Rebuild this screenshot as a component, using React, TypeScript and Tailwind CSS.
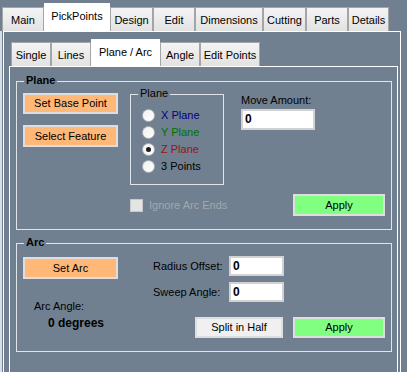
const outerTabs = [
  { name: "Main", w: "w-[42px]" },
  { name: "PickPoints", w: "w-[66px]", active: true },
  { name: "Design", w: "w-[43px]" },
  { name: "Edit", w: "w-[42px]" },
  { name: "Dimensions", w: "w-[68px]" },
  { name: "Cutting", w: "w-[43px]" },
  { name: "Parts", w: "w-[42px]" },
  { name: "Details", w: "w-[41px]" },
];

const innerTabs = [
  { name: "Single", w: "w-[40px]" },
  { name: "Lines", w: "w-[40px]" },
  { name: "Plane / Arc", w: "w-[69px]", active: true },
  { name: "Angle", w: "w-[40px]" },
  { name: "Edit Points", w: "w-[60px]" },
];

const planes = [
  { label: "X Plane", color: "text-[#000080]" },
  { label: "Y Plane", color: "text-[#007000]" },
  { label: "Z Plane", color: "text-[#a01010]", checked: true },
  { label: "3 Points", color: "text-black" },
];

function Tab({ name, w, active, tall, short }: { name: string; w: string; active?: boolean; tall: string; short: string }) {
  return active ? (
    <div className={`${w} ${tall} flex items-center justify-center bg-white pb-[1px]`}>{name}</div>
  ) : (
    <div
      className={`${w} ${short} flex items-center justify-center border-t border-r border-l border-[#a5a5a5] bg-gradient-to-b from-[#f4f4f4] to-[#e2e2e2] pt-[1px]`}
    >
      {name}
    </div>
  );
}

function GroupBox({ title, bold, className, children }: { title: string; bold?: boolean; className: string; children: React.ReactNode }) {
  return (
    <div className={`relative border border-[#e0e5ea] ${className}`}>
      <span className={`absolute -top-[8px] left-[7px] bg-[#708090] px-[2px] ${bold ? "font-bold" : ""}`}>{title}</span>
      {children}
    </div>
  );
}

function Button({ label, className }: { label: string; className: string }) {
  return (
    <div className={`flex items-center justify-center border-2 border-[#dedede] ${className}`}>{label}</div>
  );
}

function TextBox({ className }: { className: string }) {
  return (
    <div className={`flex items-center border-2 border-[#d2d2d2] bg-white pl-[2px] text-[12px] font-bold ${className}`}>0</div>
  );
}

export default function App() {
  return (
    <div className="h-[372px] w-[407px] overflow-hidden bg-[#708090] font-['Liberation_Sans',Arial,sans-serif] text-[11px] leading-[13px] text-black">
      {/* Outer tabs */}
      <div className="flex h-[31px] items-end pl-[2px]">
        {outerTabs.map((t) => (
          <Tab key={t.name} {...t} tall="h-[28px]" short="h-[24px]" />
        ))}
      </div>

      {/* Outer page */}
      <div className="h-[341px] w-[401px] border-l-2 border-[#d6dee6]">
        <div className="ml-[1px] h-full border-t border-r border-l border-white">
          {/* Inner tabs */}
          <div className="ml-[6px] flex h-[34px] items-end pl-[1px]">
            {innerTabs.map((t) => (
              <Tab key={t.name} {...t} tall="h-[27px]" short="h-[24px]" />
            ))}
          </div>

          {/* Inner page */}
          <div className="ml-[5px] h-[310px] w-[389px] border-t border-r border-l border-white pt-[14px] pl-[6px]">
            {/* Plane group */}
            <GroupBox title="Plane" bold className="h-[149px] w-[376px]">
              <div className="flex items-start">
                <div className="ml-[6px] flex w-[95px] flex-col gap-[11px] pt-[11px]">
                  <Button label="Set Base Point" className="h-[21px] bg-[#ffb878]" />
                  <Button label="Select Feature" className="h-[22px] bg-[#ffb878]" />
                </div>

                <GroupBox title="Plane" className="mt-[12px] ml-[12px] h-[91px] w-[94px]">
                  <div className="mt-[12px] flex flex-col">
                    {planes.map((p) => (
                      <div key={p.label} className="flex h-[17px] items-center">
                        <div className="ml-[11px] flex h-[13px] w-[13px] items-center justify-center rounded-full border border-[#b4b4b4] bg-gradient-to-br from-[#f0f0f0] to-white">
                          {p.checked && <div className="h-[5px] w-[5px] rounded-full bg-[#1a1a1a]" />}
                        </div>
                        <span className={`ml-[6px] ${p.color}`}>{p.label}</span>
                      </div>
                    ))}
                  </div>
                </GroupBox>

                <div className="mt-[12px] ml-[17px] flex flex-col">
                  <span>Move Amount:</span>
                  <TextBox className="mt-[2px] h-[21px] w-[74px]" />
                </div>
              </div>

              <div className="mt-[9px] flex items-center">
                <div className="ml-[113px] h-[13px] w-[13px] border border-[#c8c8c8] bg-[#e4e4e4]" />
                <span className="ml-[6px] text-[#a4a8ac]">Ignore Arc Ends</span>
                <Button label="Apply" className="ml-auto mr-[6px] h-[22px] w-[92px] bg-[#80ff80]" />
              </div>
            </GroupBox>

            {/* Arc group */}
            <GroupBox title="Arc" bold className="mt-[13px] h-[109px] w-[376px]">
              <div className="flex">
                <div className="flex w-[136px] flex-col">
                  <Button label="Set Arc" className="mt-[13px] ml-[6px] h-[22px] w-[95px] bg-[#ffb878]" />
                  <span className="mt-[21px] ml-[17px]">Arc Angle:</span>
                  <span className="mt-[4px] ml-[31px] text-[12px] font-bold">0 degrees</span>
                </div>

                <div className="flex flex-col">
                  <div className="mt-[12px] flex items-center">
                    <span className="w-[76px]">Radius Offset:</span>
                    <TextBox className="h-[20px] w-[55px]" />
                  </div>
                  <div className="mt-[6px] flex items-center">
                    <span className="w-[76px]">Sweep Angle:</span>
                    <TextBox className="h-[20px] w-[55px]" />
                  </div>
                  <div className="mt-[15px] ml-[42px] flex">
                    <Button label="Split in Half" className="h-[21px] w-[88px] border-[#d0d0d0] bg-[#f0f0f0]" />
                    <Button label="Apply" className="ml-[10px] h-[21px] w-[92px] bg-[#80ff80]" />
                  </div>
                </div>
              </div>
            </GroupBox>
          </div>
        </div>
      </div>
    </div>
  );
}
